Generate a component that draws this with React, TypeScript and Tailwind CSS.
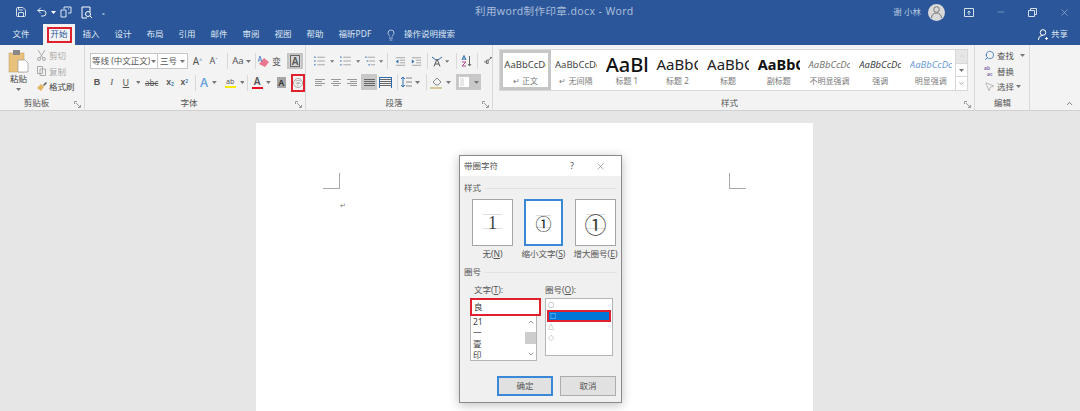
import { ChevronUp, ChevronDown, X, Minus, Lightbulb, Search, MousePointer2, Save, Undo2 } from 'lucide-react'

const Caret = ({ className = '' }: { className?: string }) => (
  <svg width="5" height="3" viewBox="0 0 5 3" className={className}>
    <path d="M0 0h5L2.5 3z" fill="#777" />
  </svg>
)

const Launcher = () => (
  <svg width="7" height="7" viewBox="0 0 7 7" fill="none" stroke="#999">
    <path d="M.5 3V.5H3M6.5 4v2.500H4M2 2l4 4" />
  </svg>
)

const Sep = ({ className = 'h-[16px]' }: { className?: string }) => <div className={`w-px bg-[#d9d9d9] ${className}`} />

const Lines = ({ align, bars }: { align: 'l' | 'c' | 'r' | 'j'; bars?: boolean }) => {
  const xs = { l: [1, 1, 1, 1], c: [1, 3, 1, 3], r: [1, 4, 1, 4], j: [1, 1, 1, 1] }[align]
  const ws = { l: [10, 7, 10, 7], c: [10, 6, 10, 6], r: [10, 7, 10, 7], j: [11, 11, 11, 11] }[align]
  return (
    <svg width="13" height="11" viewBox="0 0 13 11" stroke={align === 'j' ? '#666' : '#999'} fill="none">
      {[2.5, 4.5, 6.5, 8.5].map((y, i) => (
        <path key={y} d={`M${xs[i]} ${y}h${ws[i]}`} />
      ))}
      {bars && <path d="M.5 0v11M12.5 0v11M0 .5h13" stroke="#2b6cb0" />}
    </svg>
  )
}

const ListIcon = ({ kind }: { kind: 'b' | 'n' | 'm' }) => (
  <svg width="13" height="12" viewBox="0 0 13 12" fill="none">
    <path d={kind === 'm' ? 'M3 1.500h9M5 6h7M7 10.500h5' : 'M4 1.500h9M4 6h9M4 10.500h9'} stroke="#999" />
    <path d={kind === 'm' ? 'M0 .5h2v2H0zM2 5h2v2H2zM4 9.500h2v2H4z' : 'M0 .5h2v2H0zM0 5h2v2H0zM0 9.500h2v2H0z'} fill="#6f9bd1" />
  </svg>
)

const Indent = ({ flip }: { flip?: boolean }) => (
  <svg width="13" height="11" viewBox="0 0 13 11" fill="none">
    <path d="M1 1h11M6 4h6M6 7h6M1 10h11" stroke="#999" />
    <path d={flip ? 'M1 3l3 2.500L1 8z' : 'M4 3L1 5.500 4 8z'} fill="#2b6cb0" />
  </svg>
)

function FileTab({ label, active }: { label: string; active?: boolean }) {
  return (
    <div className={`h-full flex items-center justify-center w-[32px] text-[8.500px] ${active ? 'bg-[#f3f3f3] text-[#2b579a]' : 'text-[#dfe7f2]'}`}>
      {active ? <span className="border-2 border-[#e0202c] w-[25px] h-[16px] flex items-center justify-center leading-none">{label}</span> : label}
    </div>
  )
}

function StyleItem({ preview, label, selected }: { preview: React.ReactNode; label: string; selected?: boolean }) {
  return (
    <div className={`w-[50.700px] h-[40px] shrink-0 flex flex-col items-center overflow-hidden border-[3px] ${selected ? 'border-[#c6c6c6]' : 'border-transparent'}`}>
      <div className="h-[23px] w-[42px] overflow-hidden flex items-center whitespace-nowrap leading-none">{preview}</div>
      <div className="text-[8px] leading-[10px] text-[#777] whitespace-nowrap">{label}</div>
    </div>
  )
}

function Tile({ label, children, active, width }: { label: React.ReactNode; children: React.ReactNode; active?: boolean; width: string }) {
  return (
    <div className={`${width} flex flex-col items-center`}>
      <div className={`w-full h-[47px] bg-white flex items-center justify-center relative ${active ? 'border-2 border-[#3a88d6]' : 'border border-[#a5a5a5]'}`}>
        <div className="absolute left-[10px] right-[10px] top-[14px] h-px bg-[#dcdcdc]" />
        <div className="absolute left-[10px] right-[10px] bottom-[16px] h-px bg-[#dcdcdc]" />
        {children}
      </div>
      <div className="text-[8.500px] leading-[12px] mt-[2px] text-[#555] whitespace-nowrap">{label}</div>
    </div>
  )
}

function Dialog() {
  return (
    <div className="absolute left-[203px] top-[32px] w-[163px] h-[248px] bg-[#f0f0f0] border border-[#8a8a8a] shadow-[0_2px_10px_rgba(0,0,0,0.25)] flex flex-col text-[#555]">
      <div className="h-[20px] bg-white flex items-center pl-[4px] text-[8.500px]">
        <span className="flex-1">带圈字符</span>
        <span className="w-[14px] text-center text-[9px]">?</span>
        <div className="w-[42px] flex justify-center"><X size={11} strokeWidth={1} color="#555" /></div>
      </div>
      <div className="flex items-center gap-[4px] px-[4px] mt-[6px] h-[12px]">
        <span className="text-[8.500px]">样式</span>
        <div className="flex-1 h-px bg-[#e2e2e2]" />
      </div>
      <div className="flex pl-[12px] mt-[5px]">
        <Tile width="w-[41px]" label={<>无(<u>N</u>)</>}>
          <span className="text-[18px] leading-none font-['Liberation_Serif',serif] text-[#444] relative">1</span>
        </Tile>
        <div className="w-[11px]" />
        <Tile width="w-[39px]" active label={<>缩小文字(<u>S</u>)</>}>
          <span className="text-[16px] leading-none font-['Noto_Sans_CJK_SC',sans-serif] text-[#222] relative">①</span>
        </Tile>
        <div className="w-[12px]" />
        <Tile width="w-[41px]" label={<>增大圈号(<u>E</u>)</>}>
          <span className="text-[22px] leading-none font-['Noto_Sans_CJK_SC',sans-serif] text-[#444] relative">①</span>
        </Tile>
      </div>
      <div className="flex items-center gap-[4px] px-[4px] mt-[6px] h-[12px]">
        <span className="text-[8.500px]">圈号</span>
        <div className="flex-1 h-px bg-[#e2e2e2]" />
      </div>
      <div className="flex pl-[10px] mt-[6px]">
        <div className="w-[76px]">
          <div className="text-[8.500px] leading-[12px] pl-[4px]">文字(<u>T</u>):</div>
          <div className="w-[71px] h-[18px] mt-[2px] border-2 border-[#e0202c] bg-white flex items-center pl-[2px] text-[8.500px] text-[#333]">良</div>
          <div className="w-[67px] h-[45px] border border-[#b5b5b5] border-t-0 bg-white flex text-[8.500px] leading-[11px] text-[#444]">
            <div className="flex-1 pl-[2px]">
              <div>21</div>
              <div>一</div>
              <div>壹</div>
              <div>印</div>
            </div>
            <div className="w-[11px] flex flex-col items-center justify-between py-[2px]">
              <ChevronUp size={8} color="#666" />
              <div className="w-full h-[12px] bg-[#cdcdcd]" />
              <ChevronDown size={8} color="#666" />
            </div>
          </div>
        </div>
        <div className="w-[69px] ml-[-1px]">
          <div className="text-[8.500px] leading-[12px]">圈号(<u>O</u>):</div>
          <div className="w-[68px] h-[58px] mt-[2px] border border-[#b5b5b5] bg-white pt-[2px] pl-px text-[6px] leading-[9px] text-[#555]">
            <div className="pl-[1px] h-[9px]">○</div>
            <div className="bg-[#0078d7] border-2 border-[#e0202c] h-[12px] text-white pl-[1px] leading-[8px] mr-px">□</div>
            <div className="pl-[1px] h-[11px] mt-[1px]">△</div>
            <div className="pl-[1px] h-[11px]">◇</div>
          </div>
        </div>
      </div>
      <div className="flex justify-end gap-[7px] pr-[5px] mt-[15px]">
        <div className="w-[56px] h-[20px] bg-[#e1e1e1] border-2 border-[#3a88d6] flex items-center justify-center text-[8.500px]">确定</div>
        <div className="w-[56px] h-[20px] bg-[#e1e1e1] border border-[#adadad] flex items-center justify-center text-[8.500px]">取消</div>
      </div>
    </div>
  )
}

export default function App() {
  return (
    <div className="w-[1080px] h-[411px] overflow-hidden flex flex-col bg-[#e6e6e6] font-['Noto_Sans','Noto_Sans_CJK_SC',sans-serif]">
      {/* title bar */}
      <div className="h-[24px] bg-[#2b579a] flex items-center text-[#dbe4f0] shrink-0">
        <div className="flex items-center pl-[15px] w-[300px]">
          <Save size={12} strokeWidth={1.6} color="#fff" />
          <div className="w-[9px]" />
          <Undo2 size={12} strokeWidth={1.8} color="#fff" />
          <Caret className="ml-[3px] [&>path]:fill-white" />
          <svg width="12" height="12" viewBox="0 0 12 12" fill="none" stroke="#dfe7f2" className="ml-[4px]">
            <path d="M1 11V4h5v7zM4 3V1h7v6H8M8 3h1" />
          </svg>
          <svg width="12" height="13" viewBox="0 0 12 13" fill="none" stroke="#fff" className="ml-[9px]">
            <path d="M9 6V1H1v11h5" />
            <circle cx="7" cy="8" r="2.500" />
            <path d="M9 10l2 2" />
          </svg>
          <span className="ml-[9px] text-[8px] leading-none">₌</span>
        </div>
        <div className="w-[390px] text-[10.500px] tracking-[0.4px] text-[#a9bcd9] pl-[175px] whitespace-nowrap">利用word制作印章.docx - Word</div>
        <div className="flex items-center flex-1 justify-end pr-[10px]">
          <span className="text-[8.500px] text-[#b9c9e0]">谢 小林</span>
          <div className="w-[17px] h-[17px] rounded-full bg-[#d9d9d9] ml-[7px] flex items-center justify-center">
            <svg width="11" height="12" viewBox="0 0 11 12" fill="none" stroke="#777">
              <circle cx="5.500" cy="3.500" r="2.800" />
              <path d="M.5 12c0-3 2-5 5-5s5 2 5 5" />
            </svg>
          </div>
          <svg width="10" height="9" viewBox="0 0 10 9" fill="none" stroke="#d5dfee" className="ml-[19px]">
            <path d="M.5.5h9v8h-9zM5 7V3M3.500 4.500L5 3l1.500 1.500" />
          </svg>
          <Minus size={10} strokeWidth={1} color="#d5dfee" className="ml-[22px]" />
          <svg width="9" height="9" viewBox="0 0 9 9" fill="none" stroke="#d5dfee" className="ml-[22px]">
            <path d="M.5 2.500h6v6h-6zM2.500 2.500v-2h6v6h-2" />
          </svg>
          <X size={11} strokeWidth={1} color="#d5dfee" className="ml-[22px]" />
        </div>
      </div>

      {/* tabs */}
      <div className="h-[21px] bg-[#2b579a] flex items-stretch shrink-0 pl-[5px] pr-[12px]">
        <FileTab label="文件" />
        <div className="w-[6px]" />
        <FileTab label="开始" active />
        {['插入', '设计', '布局', '引用', '邮件', '审阅', '视图', '帮助'].map((t) => (
          <FileTab key={t} label={t} />
        ))}
        <div className="w-[46px] text-[#dfe7f2] text-[8.500px] flex items-center justify-center whitespace-nowrap ml-[1px]">福昕PDF</div>
        <div className="flex items-center ml-[7px] text-[#dfe7f2] text-[8.500px]">
          <Lightbulb size={12} strokeWidth={1.2} color="#fff" />
          <span className="ml-[7px]">操作说明搜索</span>
        </div>
        <div className="flex-1" />
        <div className="flex items-center text-[#dfe7f2] text-[8.500px]">
          <svg width="11" height="11" viewBox="0 0 11 11" fill="none" stroke="#fff">
            <circle cx="5" cy="3.500" r="2.800" />
            <path d="M.5 11c0-3 1.500-4.500 4.500-4.500M8.500 8v3M7 9.500h3" />
          </svg>
          <span className="ml-[2px]">共享</span>
        </div>
      </div>

      {/* ribbon */}
      <div className="h-[66px] bg-[#f3f3f3] border-b border-[#d0d0d0] flex shrink-0 text-[#555] relative">
        {/* clipboard */}
        <div className="w-[85px] border-r border-[#d9d9d9] flex flex-col shrink-0">
          <div className="flex h-[52px]">
            <div className="w-[37px] flex flex-col items-center pt-[5px]">
              <svg width="21" height="23" viewBox="0 0 21 23">
                <rect x="1" y="3" width="15" height="19" fill="#e8c27c" stroke="#b99a5b" strokeWidth=".5" />
                <rect x="5" y="0" width="7" height="5" fill="#888" />
                <path d="M10 10h7l3 3v9H10z" fill="#fff" stroke="#999" strokeWidth=".7" />
              </svg>
              <span className="text-[8.500px] leading-[11px] text-[#444]">粘贴</span>
              <Caret className="mt-[4px]" />
            </div>
            <div className="flex flex-col pt-[3px] text-[8.500px] leading-[15.500px]">
              <div className="flex items-center gap-[3px] text-[#aaa]">
                <svg width="9" height="11" viewBox="0 0 9 11" fill="none" stroke="#aaa"><circle cx="2" cy="9" r="1.500" /><circle cx="7" cy="9" r="1.500" /><path d="M1 0l5 8M8 0L3 8" /></svg>
                剪切
              </div>
              <div className="flex items-center gap-[3px] text-[#aaa]">
                <svg width="9" height="10" viewBox="0 0 9 10" fill="none" stroke="#aaa"><path d="M.5.500h5v7h-5zM3 3h5.500v6.500H3z" /></svg>
                复制
              </div>
              <div className="flex items-center gap-[2px] text-[#444]">
                <svg width="10" height="9" viewBox="0 0 10 9"><path d="M4 2l3 3-3 4-4-3z" fill="#e3b55c" /><path d="M6 3l3-3 1 1-3 3z" fill="#555" /></svg>
                格式刷
              </div>
            </div>
          </div>
          <div className="flex-1 flex items-center relative">
            <span className="flex-1 text-center text-[8.500px] pr-[11px]">剪贴板</span>
            <div className="absolute right-[3px] bottom-[2px]"><Launcher /></div>
          </div>
        </div>

        {/* font */}
        <div className="w-[221px] border-r border-[#d9d9d9] flex flex-col shrink-0 pl-[5px]">
          <div className="h-[52px] flex flex-col pt-[8px]">
            <div className="flex items-center h-[16px]">
              <div className="w-[67px] h-[16px] bg-white border border-[#c6c6c6] border-r-0 flex items-center text-[8.500px] whitespace-nowrap overflow-hidden pl-[1px]">
                <span className="w-[58px] overflow-hidden">等线 (中文正文)</span>
                <Caret className="ml-[1px]" />
              </div>
              <div className="w-[31px] h-[16px] bg-white border border-[#c6c6c6] flex items-center text-[8.500px] pl-[2px]">
                <span className="flex-1">三号</span>
                <Caret className="mr-[2px]" />
              </div>
              <div className="w-[17px] text-center text-[10px] ml-px">A<sup className="text-[5px] text-[#2b6cb0]">^</sup></div>
              <div className="w-[15px] text-center text-[9px]">A<sup className="text-[5px] text-[#2b6cb0]">ˇ</sup></div>
              <div className="w-[6px]" />
              <Sep />
              <div className="w-[27px] text-[9.500px] flex items-center justify-center gap-[2px]">Aa<Caret /></div>
              <Sep />
              <div className="w-[15px] flex justify-center">
                <svg width="12" height="12" viewBox="0 0 12 12"><path d="M1 9l5-6 5 4-4 5z" fill="#e8778f" /><path d="M0 7l2-6 2 6M1 5h2" fill="none" stroke="#3b76bd" strokeWidth=".8" /></svg>
              </div>
              <div className="w-[11px] text-center text-[9px] text-[#555] leading-none">变</div>
              <div className="w-[16px] h-[16px] ml-[5px] bg-[#d5d5d5] border-2 border-[#c3c3c3] flex items-center justify-center"><span className="text-[10px] font-semibold leading-none border border-[#666] px-px">A</span></div>
            </div>
            <div className="flex items-center h-[17px] mt-[5px]">
              <div className="w-[15px] text-center text-[9px] font-bold font-['Liberation_Sans',sans-serif]">B</div>
              <div className="w-[16px] text-center text-[9px] italic font-['Liberation_Serif',serif]">I</div>
              <div className="w-[14px] text-center text-[9px] underline">U</div>
              <Caret className="ml-[3px]" />
              <div className="w-[24px] text-center text-[8px] line-through">abc</div>
              <div className="w-[15px] text-center text-[8.500px] font-semibold">x<sub className="text-[5px] text-[#2b6cb0]">2</sub></div>
              <div className="w-[15px] text-center text-[8.500px] font-semibold">x<sup className="text-[5px] text-[#2b6cb0]">2</sup></div>
              <div className="w-[4px]" />
              <Sep />
              <div className="w-[17px] text-center text-[12px] leading-none text-[#6fa3dd] font-semibold">A</div>
              <Caret />
              <div className="w-[20px] flex flex-col items-center ml-[4px]">
                <span className="text-[7px] leading-[8px]">ab</span>
                <div className="w-[11px] h-[2px] bg-[#ffeb00]" />
              </div>
              <Caret />
              <div className="w-[3px]" />
              <Sep />
              <div className="w-[19px] flex flex-col items-center">
                <span className="text-[10px] leading-[11px] font-semibold">A</span>
                <div className="w-[11px] h-[2px] bg-[#e81123]" />
              </div>
              <Caret />
              <div className="w-[6px]" />
              <div className="w-[10px] h-[11px] bg-[#a6a6a6] text-[9px] leading-[11px] text-center font-semibold text-[#333]">A</div>
              <div className="ml-[5px] w-[14px] h-[18px] border-2 border-[#e0202c] flex items-center justify-center">
                <span className="w-[10px] h-[10px] rounded-full border border-[#aaa] text-[6px] leading-[8px] text-center text-[#999]">字</span>
              </div>
            </div>
          </div>
          <div className="flex-1 flex items-center relative">
            <span className="flex-1 text-center text-[8.500px] pr-[17px]">字体</span>
            <div className="absolute right-[3px] bottom-[2px]"><Launcher /></div>
          </div>
        </div>

        {/* paragraph */}
        <div className="w-[187px] border-r border-[#d9d9d9] flex flex-col shrink-0 pl-[8px]">
          <div className="h-[52px] flex flex-col pt-[9px]">
            <div className="flex items-center h-[14px] gap-[2px]">
              <ListIcon kind="b" />
              <Caret className="ml-[3px] mr-[4px]" />
              <ListIcon kind="n" />
              <Caret className="ml-[3px] mr-[3px]" />
              <ListIcon kind="m" />
              <Caret className="ml-[1px] mr-[2px]" />
              <Sep />
              <div className="w-[3px]" />
              <Indent />
              <div className="w-[2px]" />
              <Indent flip />
              <div className="w-[1px]" />
              <Sep />
              <div className="w-[16px] flex justify-center">
                <svg width="12" height="11" viewBox="0 0 12 11" fill="none">
                  <path d="M1 1l4 3M11 1L7 4" stroke="#2b6cb0" />
                  <path d="M3 10.500L6 3l3 7.500M4 8h4" stroke="#555" />
                </svg>
              </div>
              <Caret />
              <div className="w-[3px]" />
              <Sep />
              <div className="w-[19px] flex justify-center">
                <svg width="11" height="12" viewBox="0 0 11 12" fill="none">
                  <path d="M1 5l2-4.500L5 5M1.500 4h3" stroke="#2b6cb0" />
                  <path d="M1 7h4l-4 4h4" stroke="#b04a8c" />
                  <path d="M8.500 1v10M7 9l1.500 2L10 9" stroke="#666" />
                </svg>
              </div>
              <Sep />
              <svg width="10" height="8" viewBox="0 0 10 8" className="ml-[4px]"><path d="M0 5h3M3 3h2v4H3zM5 3l4-3M7 0h3" fill="none" stroke="#555" /></svg>
            </div>
            <div className="flex items-center h-[16px] mt-[6px]">
              <Lines align="l" />
              <div className="w-[3px]" />
              <Lines align="c" />
              <div className="w-[3px]" />
              <Lines align="r" />
              <div className="w-[16px] h-[16px] ml-[2px] bg-[#c8c8c8] flex items-center justify-center"><Lines align="j" /></div>
              <div className="ml-[2px]"><Lines align="j" bars /></div>
              <div className="w-[5px]" />
              <Sep />
              <div className="w-[17px] flex justify-center">
                <svg width="11" height="12" viewBox="0 0 11 12" fill="none"><path d="M2 1v10M0 3l2-2 2 2M0 9l2 2 2-2" stroke="#2b6cb0" /><path d="M5 2h6M5 6h6M5 10h6" stroke="#888" /></svg>
              </div>
              <Caret />
              <div className="w-[6px]" />
              <Sep />
              <div className="w-[19px] flex justify-center">
                <svg width="13" height="13" viewBox="0 0 13 13" fill="none"><path d="M3 6l4-4 4 4-3 3H6z" stroke="#888" /><path d="M0 12h12" stroke="#d8c9a0" strokeWidth="2" /></svg>
              </div>
              <Caret />
              <div className="w-[5px]" />
              <div className="w-[25px] h-[16px] bg-[#c8c8c8] flex items-center pl-[3px] gap-[5px]">
                <div className="w-[10px] h-[10px] bg-white grid grid-cols-2 gap-px border border-white"><div className="bg-[#e8e8e8]" /></div>
                <Caret />
              </div>
            </div>
          </div>
          <div className="flex-1 flex items-center relative">
            <span className="flex-1 text-center text-[8.500px] pr-[18px]">段落</span>
            <div className="absolute right-[3px] bottom-[2px]"><Launcher /></div>
          </div>
        </div>

        {/* styles */}
        <div className="w-[482px] border-r border-[#d9d9d9] flex flex-col shrink-0 pl-[6px]">
          <div className="h-[52px] pt-[4px] flex">
            <div className="w-[457px] h-[42px] bg-white flex border border-[#d8d8d8] overflow-hidden">
              <StyleItem selected label="↵ 正文" preview={<span className="text-[9.500px] text-[#444]">AaBbCcDc</span>} />
              <StyleItem label="↵ 无间隔" preview={<span className="text-[9.500px] text-[#444]">AaBbCcDc</span>} />
              <StyleItem label="标题 1" preview={<span className="text-[20px] font-medium text-[#111]">AaBl</span>} />
              <StyleItem label="标题 2" preview={<span className="text-[15px] text-[#222]">AaBbC</span>} />
              <StyleItem label="标题" preview={<span className="text-[15px] text-[#222]">AaBbC</span>} />
              <StyleItem label="副标题" preview={<span className="text-[14.500px] font-bold text-[#111]">AaBbC</span>} />
              <StyleItem label="不明显强调" preview={<span className="text-[9.500px] italic text-[#777]">AaBbCcDc</span>} />
              <StyleItem label="强调" preview={<span className="text-[9.500px] italic text-[#444]">AaBbCcDc</span>} />
              <StyleItem label="明显强调" preview={<span className="text-[9.500px] italic text-[#6f9bd8]">AaBbCcDc</span>} />
            </div>
            <div className="w-[12px] h-[42px] border border-l-0 border-[#d8d8d8] flex flex-col bg-white">
              <div className="flex-1 bg-[#e6e6e6] flex items-center justify-center"><ChevronUp size={6} color="#bbb" /></div>
              <div className="flex-1 flex items-center justify-center border-y border-[#d8d8d8]"><Caret /></div>
              <div className="flex-1 flex items-center justify-center"><ChevronDown size={7} color="#666" /></div>
            </div>
          </div>
          <div className="flex-1 flex items-center relative">
            <span className="flex-1 text-center text-[8.500px] pr-[14px]">样式</span>
            <div className="absolute right-[3px] bottom-[2px]"><Launcher /></div>
          </div>
        </div>

        {/* editing */}
        <div className="w-[55px] border-r border-[#d9d9d9] flex flex-col shrink-0 pl-[9px]">
          <div className="h-[52px] flex flex-col pt-[3px] text-[8.500px] leading-[15.500px]">
            <div className="flex items-center gap-[2px]">
              <Search size={11} color="#2b6cb0" strokeWidth={1.6} className="-scale-x-100" />
              查找 <Caret className="ml-[4px]" />
            </div>
            <div className="flex items-center gap-[2px]">
              <div className="w-[11px] flex flex-col text-[5px] leading-[6px] text-[#7b5ea7] font-semibold">
                <span>ab</span>
                <span className="pl-[3px]">ac</span>
              </div>
              替换
            </div>
            <div className="flex items-center gap-[2px]">
              <MousePointer2 size={11} color="#777" strokeWidth={1} />
              选择 <Caret />
            </div>
          </div>
          <div className="flex-1 flex items-center text-[8.500px] pl-[10px]">编辑</div>
        </div>

        <div className="flex-1 flex items-end justify-end pr-[6px] pb-[2px]">
          <ChevronUp size={9} color="#555" />
        </div>
      </div>

      {/* document */}
      <div className="flex-1 flex justify-center pt-[12px] pr-[11px] min-h-0">
        <div className="w-[557px] h-[300px] bg-white relative pt-[50px] px-[67px]">
          <div className="flex justify-between">
            <div className="w-[17px] h-[16px] border-r border-b border-[#a8a8a8]" />
            <div className="w-[17px] h-[16px] border-l border-b border-[#a8a8a8]" />
          </div>
          <div className="pl-[17px] mt-[12px] text-[7px] leading-[10px] text-[#777]">↵</div>
          <Dialog />
        </div>
      </div>
    </div>
  )
}
